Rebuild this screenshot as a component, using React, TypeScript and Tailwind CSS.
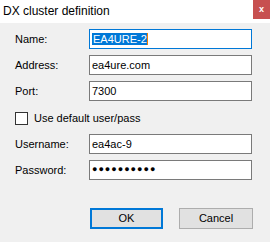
import React from "react";

function Field({ label, children }: { label: string; children: React.ReactNode }) {
  return (
    <div className="flex items-center h-[20px]">
      <span className="w-[74px] pl-[15px] box-content shrink-0 -ml-[15px]">{label}</span>
      {children}
    </div>
  );
}

function TextBox({ value, focused, mono }: { value: React.ReactNode; focused?: boolean; mono?: boolean }) {
  return (
    <div
      className={`w-[163px] h-[20px] bg-white border flex items-center px-[2px] ${
        focused ? "border-[#0078d7]" : "border-[#7a7a7a]"
      } ${mono ? "tracking-[1px]" : ""}`}
    >
      {value}
    </div>
  );
}

export default function App() {
  return (
    <div className="w-[270px] h-[242px] bg-[#f0f0f0] text-black text-[11px] font-['Liberation_Sans',sans-serif] flex flex-col">
      <div className="h-[23px] bg-white flex items-start justify-between">
        <span className="pl-[3px] pt-[3px] text-[12px] leading-[16px]">DX cluster definition</span>
        <div className="w-[17px] h-[19px] bg-[#c75050] flex items-center justify-center text-white text-[9px] font-bold leading-none">
          x
        </div>
      </div>

      <div className="flex flex-col pl-[15px] pt-[6px]">
        <div className="flex flex-col gap-[6px]">
          <Field label="Name:">
            <TextBox
              focused
              value={
                <span className="flex items-center">
                  <span className="bg-[#0078d7] text-white leading-[12px] pl-[1px]">EA4URE-2</span>
                  <span className="w-[1px] h-[12px] bg-[#f08000]" />
                </span>
              }
            />
          </Field>
          <Field label="Address:">
            <TextBox value="ea4ure.com" />
          </Field>
          <Field label="Port:">
            <TextBox value="7300" />
          </Field>
        </div>

        <label className="flex items-center gap-[6px] mt-[11px] h-[13px]">
          <span className="w-[13px] h-[13px] border border-[#333] bg-white shrink-0" />
          <span>Use default user/pass</span>
        </label>

        <div className="flex flex-col gap-[6px] mt-[9px]">
          <Field label="Username:">
            <TextBox value="ea4ac-9" />
          </Field>
          <Field label="Password:">
            <TextBox mono value={<span className="text-[9px]">●●●●●●●●●●</span>} />
          </Field>
        </div>

        <div className="flex gap-[16px] mt-[28px] pl-[75px]">
          <button className="w-[73px] h-[21px] border-2 border-[#0078d7] bg-[#e1e1e1]">OK</button>
          <button className="w-[74px] h-[21px] border border-[#adadad] bg-[#e1e1e1]">Cancel</button>
        </div>
      </div>
    </div>
  );
}
